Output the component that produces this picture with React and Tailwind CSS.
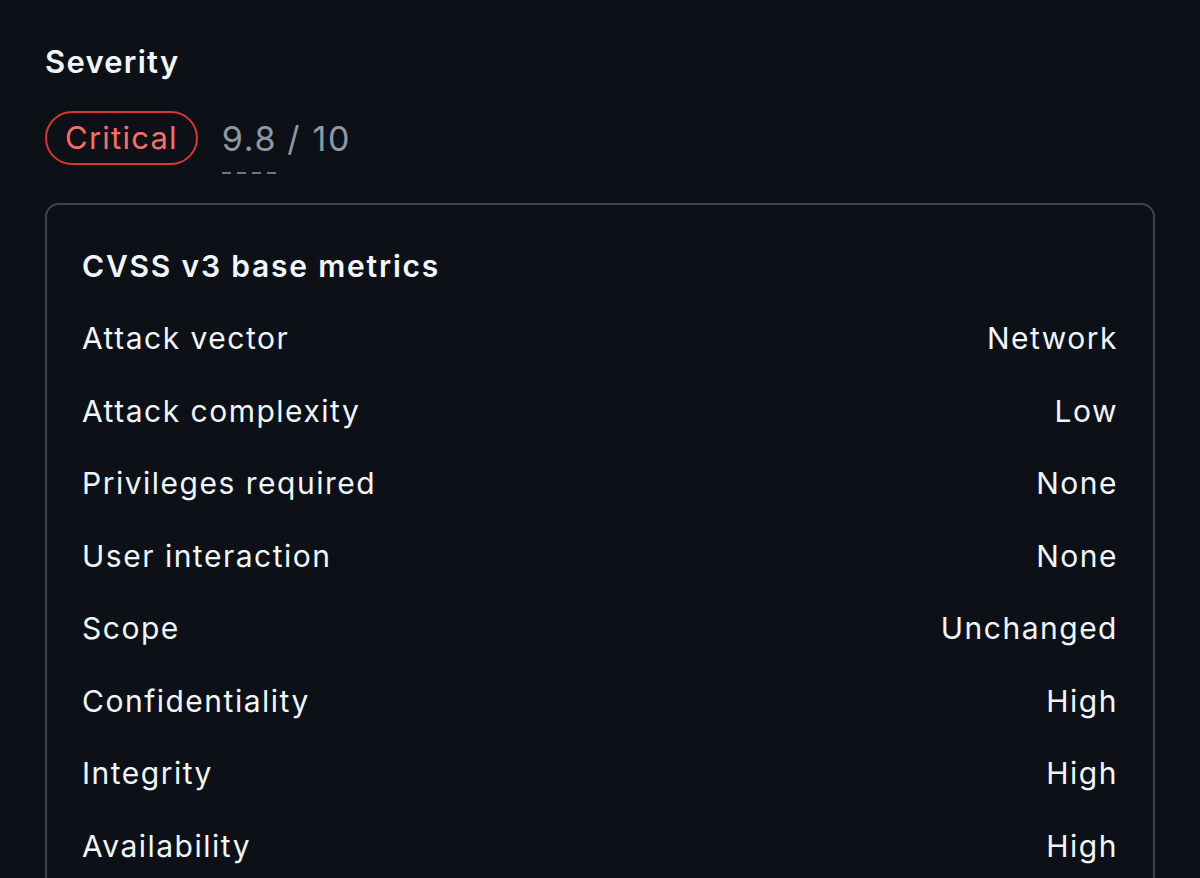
import React from 'react';

const metrics = [
  ['Attack vector', 'Network'],
  ['Attack complexity', 'Low'],
  ['Privileges required', 'None'],
  ['User interaction', 'None'],
  ['Scope', 'Unchanged'],
  ['Confidentiality', 'High'],
  ['Integrity', 'High'],
  ['Availability', 'High'],
];

const App = () => {
  return (
    <div
      className="h-[878px] overflow-hidden bg-[#0d1117] px-[45px] pt-[40px] text-[#f0f6fc]"
      style={{ fontFamily: 'Inter, "Noto Sans", sans-serif' }}
    >
      <h2 className="text-[31px] font-semibold leading-[44px] tracking-[0.04em]">Severity</h2>

      <div className="mt-[27px] flex items-center gap-[24px]">
        <span className="flex h-[54px] items-center rounded-full border-2 border-[#da3633] px-[18px] text-[31px] tracking-[0.04em] text-[#f47067]">
          Critical
        </span>
        <span className="flex items-baseline gap-[10px] text-[34px] tracking-[0.05em] text-[#9198a1]">
          <span className="relative">
            9.8
            <span className="absolute left-0 right-[-2px] bottom-[-10px] h-[2px] bg-[linear-gradient(to_right,#6e7681_60%,transparent_0)] bg-[length:15px_2px] bg-repeat-x" />
          </span>
          <span>/ 10</span>
        </span>
      </div>

      <div className="mt-[38px] rounded-[14px] border-2 border-[#3d444d] px-[35px] pt-[38px] pb-[30px]">
        <h3 className="text-[30px] font-semibold leading-[46px] tracking-[0.06em]">CVSS v3 base metrics</h3>
        <ul className="mt-[26px] flex flex-col gap-[26px]">
          {metrics.map(([label, value]) => (
            <li
              key={label}
              className="flex items-center justify-between text-[30px] leading-[46.5px] tracking-[0.05em]"
            >
              <span>{label}</span>
              <span>{value}</span>
            </li>
          ))}
        </ul>
      </div>
    </div>
  );
};

export default App;
